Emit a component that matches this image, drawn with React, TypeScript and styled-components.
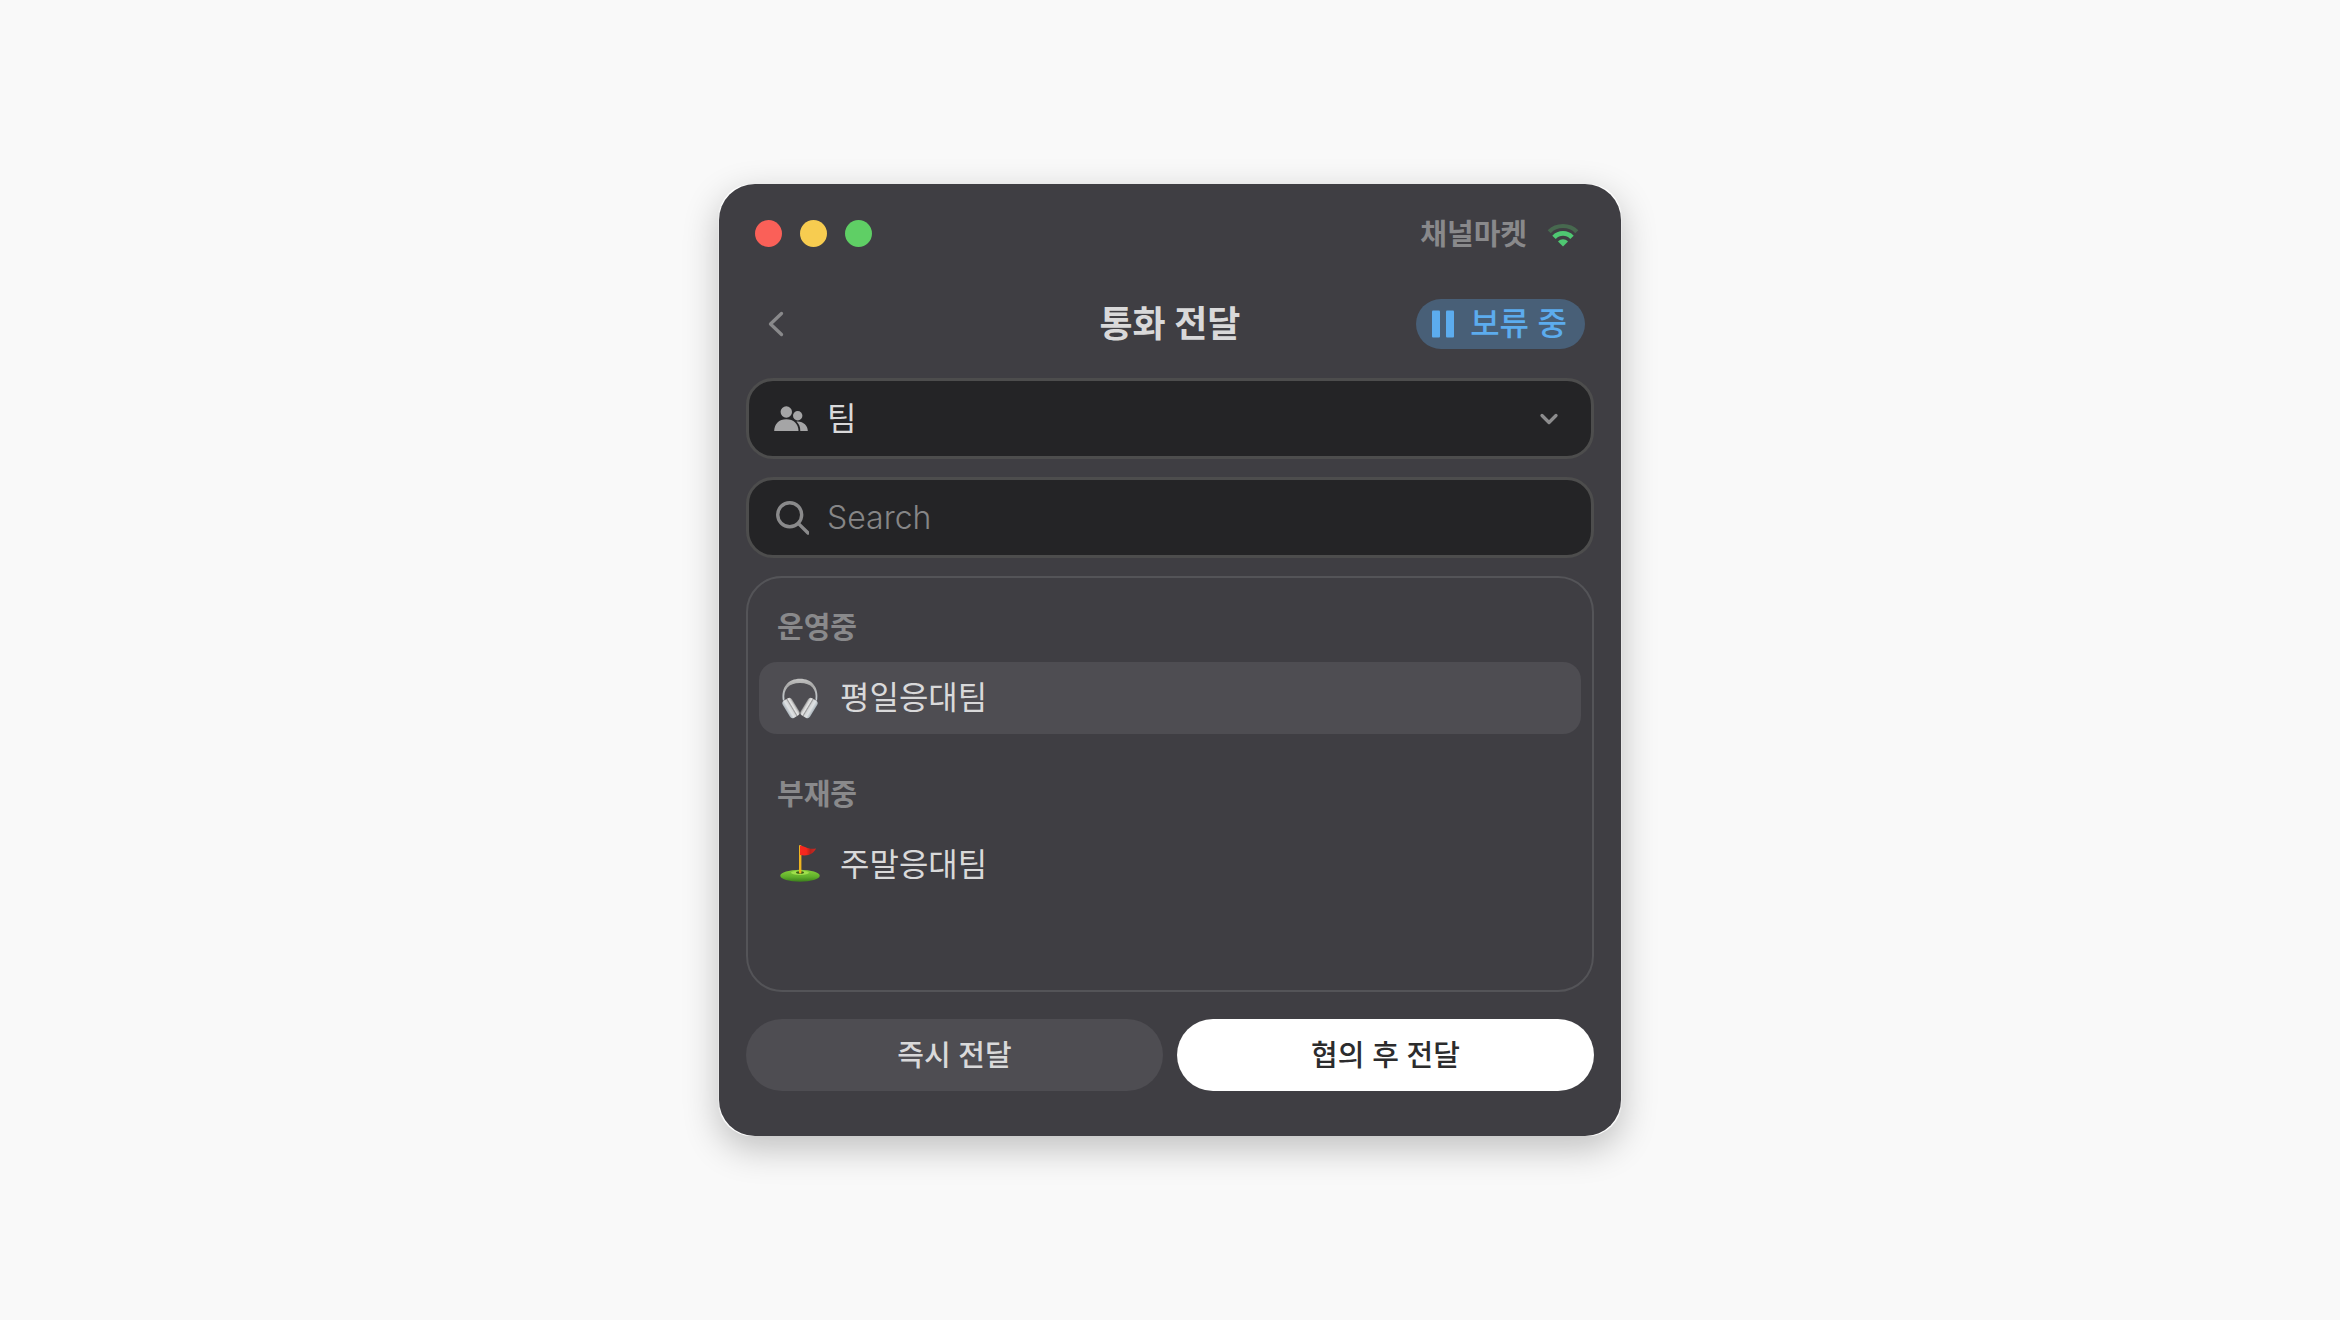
import React, { useState } from "react";
import styled, { createGlobalStyle, css } from "styled-components";

const color = {
  page: "#f9f9f9",
  surface: "#3f3e43",
  raised: "#4e4d52",
  outline: "#545458",
  field: "#242426",
  fieldBorder: "#4d4d4d",
  text: "#d9d9da",
  icon: "#a5a5a6",
  muted: "#89898b",
  hint: "#868687",
  badge: "#485f77",
  badgeText: "#5cacee",
};

const GlobalStyle = createGlobalStyle`
  *, *::before, *::after { box-sizing: border-box; }
  body {
    margin: 0;
    background: ${color.page};
    color: ${color.text};
    font-family: Inter, "Noto Sans CJK KR", sans-serif;
    -webkit-font-smoothing: antialiased;
  }
  button, input, select { font: inherit; color: inherit; }
  svg { display: block; flex: none; }
`;

const Page = styled.main`
  min-height: 100vh;
  display: grid;
  place-items: center;
  padding: 24px;
`;

const Frame = styled.section`
  width: 100%;
  max-width: 902px;
  border-radius: 33px;
  background: #ffffff;
  box-shadow:
    -1px 0 0 rgba(255, 255, 255, 0.3),
    1px 0 0 rgba(255, 255, 255, 0.3),
    0 12px 36px rgba(0, 0, 0, 0.24);
`;

const Window = styled.div`
  border-radius: 36px;
  background: ${color.surface};
`;

const TitleBar = styled.header`
  display: flex;
  align-items: center;
  justify-content: space-between;
  height: 99px;
  padding: 0 42px 0 36px;
`;

const Lights = styled.div`
  display: flex;
  gap: 18px;
`;

const Light = styled.button<{ $tone: string }>`
  width: 27px;
  height: 27px;
  padding: 0;
  border: 0;
  border-radius: 50%;
  background: ${(p) => p.$tone};
`;

const Channel = styled.div`
  display: flex;
  align-items: center;
  gap: 20px;
  padding-top: 2px;
  color: ${color.muted};
  font-size: 29px;
  line-height: 42px;
  font-weight: 700;
`;

const Nav = styled.div`
  display: grid;
  grid-template-columns: 1fr auto 1fr;
  align-items: center;
  height: 82px;
  padding: 0 36px;
`;

const BackButton = styled.button`
  justify-self: start;
  display: grid;
  place-items: center;
  width: 42px;
  height: 42px;
  padding: 0;
  border: 0;
  background: none;
  color: ${color.muted};
`;

const Title = styled.h1`
  margin: 0;
  font-size: 36px;
  line-height: 48px;
  font-weight: 700;
`;

const Badge = styled.span`
  justify-self: end;
  display: flex;
  align-items: center;
  gap: 16px;
  height: 50px;
  padding: 0 18px 0 16px;
  border-radius: 25px;
  background: ${color.badge};
  color: ${color.badgeText};
  font-size: 32px;
  line-height: 48px;
  font-weight: 500;
`;

const Body = styled.div`
  display: flex;
  flex-direction: column;
  gap: 18px;
  padding: 13px 27px 45px;
`;

const Field = styled.label`
  display: flex;
  align-items: center;
  gap: 18px;
  height: 81px;
  padding: 0 32px 0 24px;
  border: 3px solid ${color.fieldBorder};
  border-radius: 27px;
  background: ${color.field};
  color: ${color.icon};
`;

const control = css`
  flex: 1;
  min-width: 0;
  height: 72px;
  padding: 0;
  border: 0;
  outline: 0;
  background: none;
  color: ${color.text};
  font-size: 32px;
`;

const TypeSelect = styled.select`
  ${control}
  appearance: none;
`;

const SearchInput = styled.input`
  ${control}
  font-weight: 300;
  &::placeholder { color: ${color.hint}; opacity: 1; }
`;

const Teams = styled.div`
  display: flex;
  flex-direction: column;
  gap: 23px;
  min-height: 416px;
  padding: 12px 11px;
  border: 2px solid ${color.outline};
  border-radius: 36px;
`;

const Group = styled.section`
  display: flex;
  flex-direction: column;
`;

const GroupTitle = styled.h2`
  margin: 0;
  padding: 17px 18px 13px;
  color: ${color.muted};
  font-size: 29px;
  line-height: 42px;
  font-weight: 700;
`;

const TeamRow = styled.button<{ $selected: boolean }>`
  display: flex;
  align-items: center;
  gap: 20px;
  width: 100%;
  height: 72px;
  padding: 0 21px;
  border: 0;
  border-radius: 18px;
  background: ${(p) => (p.$selected ? color.raised : "transparent")};
  font-size: 32px;
  line-height: 48px;
  text-align: left;
`;

const Actions = styled.div`
  display: grid;
  grid-template-columns: 1fr 1fr;
  gap: 14px;
  padding-top: 9px;
`;

const Action = styled.button<{ $primary?: boolean }>`
  height: 72px;
  padding: 2px 24px 0;
  border: 0;
  border-radius: 36px;
  background: ${(p) => (p.$primary ? "#ffffff" : color.raised)};
  color: ${(p) => (p.$primary ? "#2c2c2d" : color.text)};
  font-size: 29px;
  line-height: 42px;
  font-weight: 500;
`;

const WifiIcon = () => (
  <svg width="32" height="26" viewBox="0 0 32 26" fill="none" aria-hidden="true">
    <path d="M2.2 9.700C9.500 2.100 22.500 2.100 29.800 9.700" stroke="#47694f" strokeWidth="4.200" />
    <path d="M7 15.300C12 10.100 20 10.100 25 15.300" stroke="#4fc872" strokeWidth="4.800" />
    <path d="M16 24.500 11 19.500C14 16.500 18 16.500 21 19.500Z" fill="#4fc872" />
  </svg>
);

const BackIcon = () => (
  <svg width="16" height="26" viewBox="0 0 16 26" fill="none" stroke="currentColor" strokeWidth="3.300" strokeLinecap="round" strokeLinejoin="round" aria-hidden="true">
    <path d="M13.500 2.500 2.500 13 13.500 23.500" />
  </svg>
);

const PauseIcon = () => (
  <svg width="22" height="28" viewBox="0 0 22 28" fill="currentColor" aria-hidden="true">
    <rect x="0" y="0.500" width="8" height="27" rx="1" />
    <rect x="14" y="0.500" width="8" height="27" rx="1" />
  </svg>
);

const PeopleIcon = () => (
  <svg width="36" height="36" viewBox="0 0 36 36" fill="currentColor" aria-hidden="true">
    <circle cx="13.300" cy="11" r="5.700" />
    <path d="M1.200 30C1.200 23 6 18.300 13.300 18.300S25.500 23 25.500 30Z" />
    <circle cx="24.700" cy="14.700" r="4.700" />
    <path d="M23.500 20.600C30 20 34.800 24.500 34.800 30H27.300C27.300 26 26 23 23.500 20.600Z" />
  </svg>
);

const ChevronIcon = () => (
  <svg width="20" height="14" viewBox="0 0 20 14" fill="none" stroke="#8c8c8d" strokeWidth="3.300" strokeLinecap="round" strokeLinejoin="round" aria-hidden="true">
    <path d="M3 3.500 10 10.500 17 3.500" />
  </svg>
);

const SearchIcon = () => (
  <svg width="36" height="36" viewBox="0 0 36 36" fill="none" stroke="#8a8a8b" strokeWidth="3.400" strokeLinecap="round" aria-hidden="true">
    <circle cx="16.700" cy="14.800" r="12" />
    <path d="M25.500 23.600 35 33" />
  </svg>
);

const HeadphonesIcon = () => (
  <svg width="40" height="42" viewBox="0 0 40 42" fill="none" aria-hidden="true">
    <defs>
      <linearGradient id="band" x1="0" y1="0" x2="0" y2="1">
        <stop offset="0" stopColor="#c4c4c4" />
        <stop offset="0.300" stopColor="#a9a9a8" />
        <stop offset="1" stopColor="#c9d0d5" />
      </linearGradient>
      <linearGradient id="cup" x1="0" y1="0" x2="1" y2="0">
        <stop offset="0" stopColor="#a9b3ba" />
        <stop offset="0.300" stopColor="#dfe2e4" />
        <stop offset="0.500" stopColor="#d2d4d5" />
        <stop offset="0.600" stopColor="#979798" />
        <stop offset="0.700" stopColor="#e6e6e6" />
        <stop offset="0.850" stopColor="#cfcfcf" />
        <stop offset="1" stopColor="#8e8e8e" />
      </linearGradient>
    </defs>
    <path d="M3 24C0.500 10 8.500 1.700 20 1.700S39.500 10 37 24L35.500 22.500C36.800 12.500 31.500 5.900 20 5.900S3.200 12.500 4.500 22.500Z" fill="url(#band)" />
    <g transform="translate(11 31) rotate(-31)">
      <rect x="-5.400" y="-10" width="10.800" height="20" rx="3.200" fill="url(#cup)" />
    </g>
    <g transform="translate(29 31) scale(-1 1) rotate(-31)">
      <rect x="-5.400" y="-10" width="10.800" height="20" rx="3.200" fill="url(#cup)" />
    </g>
  </svg>
);

const GolfIcon = () => (
  <svg width="40" height="42" viewBox="0 0 40 42" fill="none" aria-hidden="true">
    <defs>
      <linearGradient id="grass" x1="0" y1="0" x2="0" y2="1">
        <stop offset="0" stopColor="#86cf3c" />
        <stop offset="0.600" stopColor="#5fae2a" />
        <stop offset="1" stopColor="#3a7d1c" />
      </linearGradient>
      <linearGradient id="flag" x1="0" y1="0" x2="1" y2="0">
        <stop offset="0" stopColor="#f8291f" />
        <stop offset="0.400" stopColor="#f4271d" />
        <stop offset="0.650" stopColor="#b3231d" />
        <stop offset="1" stopColor="#d32a22" />
      </linearGradient>
    </defs>
    <ellipse cx="20" cy="31.800" rx="19.700" ry="6" fill="url(#grass)" />
    <ellipse cx="20" cy="28.800" rx="9" ry="2.200" fill="#9fe04c" />
    <ellipse cx="20" cy="28.500" rx="4" ry="1.300" fill="#3d5d1a" />
    <rect x="19" y="1" width="2.400" height="28.500" rx="1" fill="#efb420" />
    <path d="M20 1.500C25 2 28 6 36 4.500C33.500 9.500 29 12.500 20 11Z" fill="url(#flag)" />
  </svg>
);

const groups = [
  { title: "운영중", teams: [{ name: "평일응대팀", Icon: HeadphonesIcon }] },
  { title: "부재중", teams: [{ name: "주말응대팀", Icon: GolfIcon }] },
];

const lights = [
  { label: "닫기", tone: "#fa6058" },
  { label: "최소화", tone: "#f7cc50" },
  { label: "확대", tone: "#5fcf65" },
];

export default function App() {
  const [selected, setSelected] = useState("평일응대팀");
  const [query, setQuery] = useState("");

  return (
    <>
      <GlobalStyle />
      <Page>
        <Frame>
          <Window>
            <TitleBar>
              <Lights>
                {lights.map((l) => (
                  <Light key={l.label} type="button" aria-label={l.label} $tone={l.tone} />
                ))}
              </Lights>
              <Channel>
                채널마켓
                <WifiIcon />
              </Channel>
            </TitleBar>
            <Nav>
              <BackButton type="button" aria-label="뒤로">
                <BackIcon />
              </BackButton>
              <Title>통화 전달</Title>
              <Badge>
                <PauseIcon />
                보류 중
              </Badge>
            </Nav>
            <Body>
              <Field>
                <PeopleIcon />
                <TypeSelect aria-label="전달 대상" defaultValue="team">
                  <option value="team">팀</option>
                </TypeSelect>
                <ChevronIcon />
              </Field>
              <Field>
                <SearchIcon />
                <SearchInput
                  type="text"
                  aria-label="Search"
                  placeholder="Search"
                  value={query}
                  onChange={(e) => setQuery(e.target.value)}
                />
              </Field>
              <Teams>
                {groups.map((g) => (
                  <Group key={g.title}>
                    <GroupTitle>{g.title}</GroupTitle>
                    {g.teams.map(({ name, Icon }) => (
                      <TeamRow
                        key={name}
                        type="button"
                        aria-pressed={selected === name}
                        $selected={selected === name}
                        onClick={() => setSelected(name)}
                      >
                        <Icon />
                        {name}
                      </TeamRow>
                    ))}
                  </Group>
                ))}
              </Teams>
              <Actions>
                <Action type="button">즉시 전달</Action>
                <Action type="button" $primary>
                  협의 후 전달
                </Action>
              </Actions>
            </Body>
          </Window>
        </Frame>
      </Page>
    </>
  );
}
